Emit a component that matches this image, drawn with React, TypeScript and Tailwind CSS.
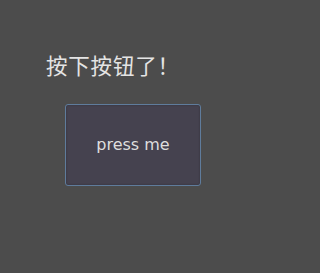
export default function App() {
  return (
    <div className="w-full min-h-screen bg-[#4c4c4c] flex flex-col items-start pl-[46px] pt-[51px]">
      <div className="text-[21.5px] leading-[28px] tracking-[0.8px] text-[#e4e4e4] font-['Noto_Sans_CJK_SC',sans-serif]">
        按下按钮了！
      </div>
      <button className="mt-[25px] ml-[19px] w-[136px] h-[82px] rounded-[3px] border border-[#5f7c9c] bg-[#45424f] text-[16px] text-[#dedede] flex items-center justify-center shadow-[inset_0_0_2px_rgba(0,0,0,0.3)] font-['DejaVu_Sans',sans-serif]">
        press me
      </button>
    </div>
  );
}
